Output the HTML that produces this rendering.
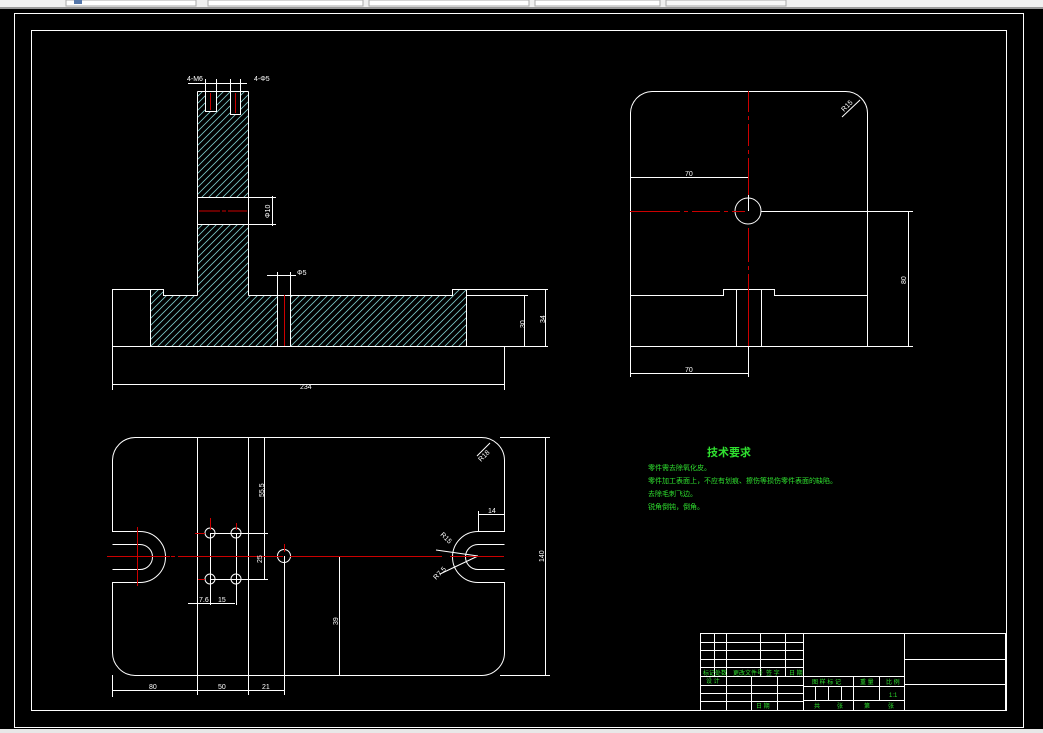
<!DOCTYPE html>
<html><head><meta charset="utf-8"><style>
html,body{margin:0;padding:0;background:#000;width:1043px;height:733px;overflow:hidden}
svg{display:block}
text{font-family:"Liberation Sans","Noto Sans CJK SC",sans-serif}
</style></head><body>
<svg width="1043" height="733" viewBox="0 0 1043 733" xmlns="http://www.w3.org/2000/svg" shape-rendering="crispEdges">
<defs>
<pattern id="h" width="7" height="7" patternUnits="userSpaceOnUse">
<path d="M-1,8 L8,-1 M-1,1 L1,-1 M6,8 L8,6" stroke="#7cc8c8" stroke-width="0.8" shape-rendering="auto"/>
</pattern>
</defs>
<rect width="1043" height="733" fill="#000"/>
<!-- top toolbar -->
<rect x="0" y="0" width="1043" height="9" fill="#f0f0f0"/>
<rect x="0" y="7" width="1043" height="2" fill="#999"/>
<rect x="66" y="0" width="130" height="6" fill="#fff" stroke="#aaa"/>
<rect x="208" y="0" width="155" height="6" fill="#fff" stroke="#aaa"/>
<rect x="369" y="0" width="160" height="6" fill="#fff" stroke="#aaa"/>
<rect x="535" y="0" width="125" height="6" fill="#fff" stroke="#aaa"/>
<rect x="666" y="0" width="120" height="6" fill="#f7f7f7" stroke="#aaa"/>
<rect x="74" y="0" width="8" height="4" fill="#5577aa"/>
<!-- bottom gray -->
<rect x="0" y="729" width="1043" height="4" fill="#e8e8e8"/>
<g fill="none" stroke="#fff" stroke-width="1">
<rect x="14.5" y="13.5" width="1009" height="714"/>
<rect x="31.5" y="30.5" width="975" height="680"/>
</g>

<!-- ===== top-left section view ===== -->
<rect x="197" y="91" width="51" height="106" fill="url(#h)"/>
<rect x="197" y="224" width="51" height="71" fill="url(#h)"/>
<rect x="150" y="295" width="127" height="51" fill="url(#h)"/>
<rect x="150" y="289" width="13" height="6" fill="url(#h)"/>
<rect x="290" y="295" width="176" height="51" fill="url(#h)"/>
<rect x="452" y="289" width="14" height="6" fill="url(#h)"/>
<rect x="205" y="91" width="11" height="21" fill="#000"/>
<rect x="230" y="91" width="10" height="23" fill="#000"/>
<g fill="none" stroke="#fff" stroke-width="1">
<path d="M197.5,91.5 H248.5 M197.5,91.5 V295.5 M248.5,91.5 V295.5"/>
<path d="M205.5,91 V111.5 H216.5 V91 M230.5,91 V114.5 H240.5 V91"/>
<path d="M197,197.5 H276 M197,224.5 H276 M272.5,196 V226"/>
<path d="M112.5,289.5 H163.5 V295.5 H197.5 M248.5,295.5 H452.5 V289.5 H548 M466,295.5 H528"/>
<path d="M112.5,289 V390 M150.5,289 V346 M466.5,289 V346 M504.5,346 V390 M112,346.5 H548"/>
<path d="M277.5,272 V346 M290.5,272 V346 M267,275.5 H296"/>
<path d="M112,384.5 H504 M524.5,295 V346 M545.5,289 V346"/>
<path d="M188,83.5 H247 M205.5,79 V91 M216.5,79 V91 M230.5,79 V91 M240.5,79 V91"/>
</g>
<g stroke="#c00" stroke-width="1.2" fill="none">
<path d="M210.5,93 V110 M235.5,93 V113 M284.5,295 V346"/>
<path d="M199,211 H220 M222,211 H226 M228,211 H247"/>
</g>
<g fill="#fff" font-size="7">
<text x="187" y="81">4-M6</text><text x="254" y="81">4-Φ5</text>
<text x="297" y="275">Φ5</text>
<text x="300" y="389">234</text>
<text transform="translate(270,218) rotate(-90)">Φ10</text>
<text transform="translate(525,328) rotate(-90)">30</text>
<text transform="translate(545,323) rotate(-90)">34</text>
</g>

<!-- ===== bottom-left plan view ===== -->
<g fill="none" stroke="#fff" stroke-width="1">
<path d="M112.5,460 A23,23 0 0 1 135,437.5 H481 A23,23 0 0 1 504.5,460 V531.5 H478 M478,544.5 H504.5 M504.5,569.5 H478 M478,582.5 H504.5 V652 A23,23 0 0 1 481,675.5 H135 A23,23 0 0 1 112.5,652 V582.5 H140 M140,569.5 H112.5 M112.5,544.5 H140 M140,531.5 H112.5 V460" shape-rendering="auto"/>
<path d="M140,544.5 A12.5,12.5 0 0 1 140,569.5 M140,531.5 A25.5,25.5 0 0 1 140,582.5" shape-rendering="auto"/>
<path d="M478,544.5 A12.5,12.5 0 0 0 478,569.5 M478,531.5 A25.5,25.5 0 0 0 478,582.5" shape-rendering="auto"/>
<path d="M197.5,437 V695 M248.5,437 V695 M264.5,437 V579"/>
<path d="M210,533.5 H268 M210,579.5 H268 M210.5,533 V605 M236.5,533 V605"/>
<circle cx="210" cy="533" r="5" shape-rendering="auto"/><circle cx="236" cy="533" r="5" shape-rendering="auto"/>
<circle cx="210" cy="579" r="5" shape-rendering="auto"/><circle cx="236" cy="579" r="5" shape-rendering="auto"/>
<circle cx="284" cy="556" r="6.5" shape-rendering="auto"/>
<path d="M290,556.5 H343 M339.5,556 V675 M284.5,556 V695"/>
<path d="M545.5,437 V675 M500,437.5 H550 M500,675.5 H550"/>
<path d="M112.5,675 V697 M112,690.5 H284 M188,603.5 H235"/>
<path d="M478.5,511 V531 M478,514.5 H504 M504.5,511 V531"/>
<path d="M477,456 L490,443 M436,550 L478,556 M440,574 L478,556" shape-rendering="auto"/>
</g>
<g stroke="#c00" stroke-width="1.2" fill="none">
<path d="M107,556.5 H170 M171,556.5 H175 M178,556.5 H283 M290,556.5 H343 M343,556.5 H442 M450,556.5 H504"/>
<path d="M137.5,527 V586 M210.5,518 V530 M236.5,523 V530 M195,533.5 H205 M198,579.5 H205 M284.5,544 V552"/>
</g>
<g fill="#fff" font-size="7">
<text transform="translate(264,497) rotate(-90)">55.5</text>
<text transform="translate(262,563) rotate(-90)">25</text>
<text transform="translate(338,625) rotate(-90)">39</text>
<text transform="translate(544,562) rotate(-90)">140</text>
<text x="149" y="689">80</text><text x="218" y="689">50</text><text x="262" y="689">21</text>
<text x="199" y="602">7.6</text><text x="218" y="602">15</text>
<text x="488" y="513">14</text>
<text transform="translate(481,462) rotate(-45)">R18</text>
<text transform="translate(440,535) rotate(45)">R15</text>
<text transform="translate(436,580) rotate(-45)">R7.5</text>
</g>

<!-- ===== top-right side view ===== -->
<g fill="none" stroke="#fff" stroke-width="1">
<path d="M630.5,346 V113 A22,22 0 0 1 652,91.5 H845 A22,22 0 0 1 867.5,113 V346" shape-rendering="auto"/>
<path d="M630,346.5 H913 M630,295.5 H723.5 V289.5 H774.5 V295.5 H867 M736.5,289 V346 M761.5,289 V346"/>
<circle cx="748" cy="211" r="13" shape-rendering="auto"/>
<path d="M761,211.5 H913 M908.5,211 V346"/>
<path d="M630,177.5 H748 M748.5,173 V211 M630,373.5 H748 M630.5,346 V377 M748.5,346 V377"/>
<path d="M842,117 L860,100" shape-rendering="auto"/>
</g>
<g stroke="#c00" stroke-width="1.2" fill="none">
<path d="M748.5,91 V112 M748.5,116 V120 M748.5,124 V146 M748.5,150 V154 M748.5,158 V195 M748.5,228 V262 M748.5,266 V270 M748.5,274 V346"/>
<path d="M630,211.5 H680 M684,211.5 H688 M692,211.5 H720 M724,211.5 H728 M732,211.5 H745"/>
</g>
<g fill="#fff" font-size="7">
<text x="685" y="176">70</text><text x="685" y="372">70</text>
<text transform="translate(906,284) rotate(-90)">80</text>
<text transform="translate(844,112) rotate(-45)">R15</text>
</g>

<!-- ===== technical requirements ===== -->
<g fill="#2fe02f">
<text x="707" y="456" font-size="11" font-weight="bold">技术要求</text>
<text x="648" y="470" font-size="7">零件需去除氧化皮。</text>
<text x="648" y="483" font-size="7">零件加工表面上，不应有划痕、擦伤等损伤零件表面的缺陷。</text>
<text x="648" y="496" font-size="7">去除毛刺飞边。</text>
<text x="648" y="509" font-size="7">锐角倒钝，倒角。</text>
</g>

<!-- ===== title block ===== -->
<g fill="none" stroke="#fff" stroke-width="1">
<rect x="700.5" y="633.5" width="305" height="77"/>
<path d="M803.5,633 V710 M904.5,633 V710 M904,659.5 H1006 M904,684.5 H1006"/>
<path d="M803,676.5 H904 M803,686.5 H904 M803,700.5 H904 M853.5,676 V710 M879.5,676 V700 M815.5,686 V700 M828.5,686 V700 M841.5,686 V700"/>
<path d="M714.5,633 V676 M726.5,633 V710 M760.5,633 V676 M785.5,633 V676 M700,642.5 H803 M700,650.5 H803 M700,659.5 H803 M700,667.5 H803 M700,676.5 H803"/>
<path d="M751.5,676 V710 M777.5,676 V710 M700,685.5 H803 M700,693.5 H803 M700,701.5 H803"/>
</g>
<g fill="#2fe02f" font-size="6">
<text x="703" y="675">标记</text><text x="715" y="675">处数</text><text x="733" y="675">更改文件号</text><text x="766" y="675">签 字</text><text x="789" y="675">日 期</text>
<text x="706" y="683">设 计</text>
<text x="812" y="684">图 样 标 记</text><text x="860" y="684">重 量</text><text x="886" y="684">比 例</text>
<text x="889" y="697">1:1</text>
<text x="756" y="708">日 期</text>
<text x="814" y="708">共</text><text x="837" y="708">张</text><text x="864" y="708">第</text><text x="888" y="708">张</text>
</g>
</svg>
</body></html>
